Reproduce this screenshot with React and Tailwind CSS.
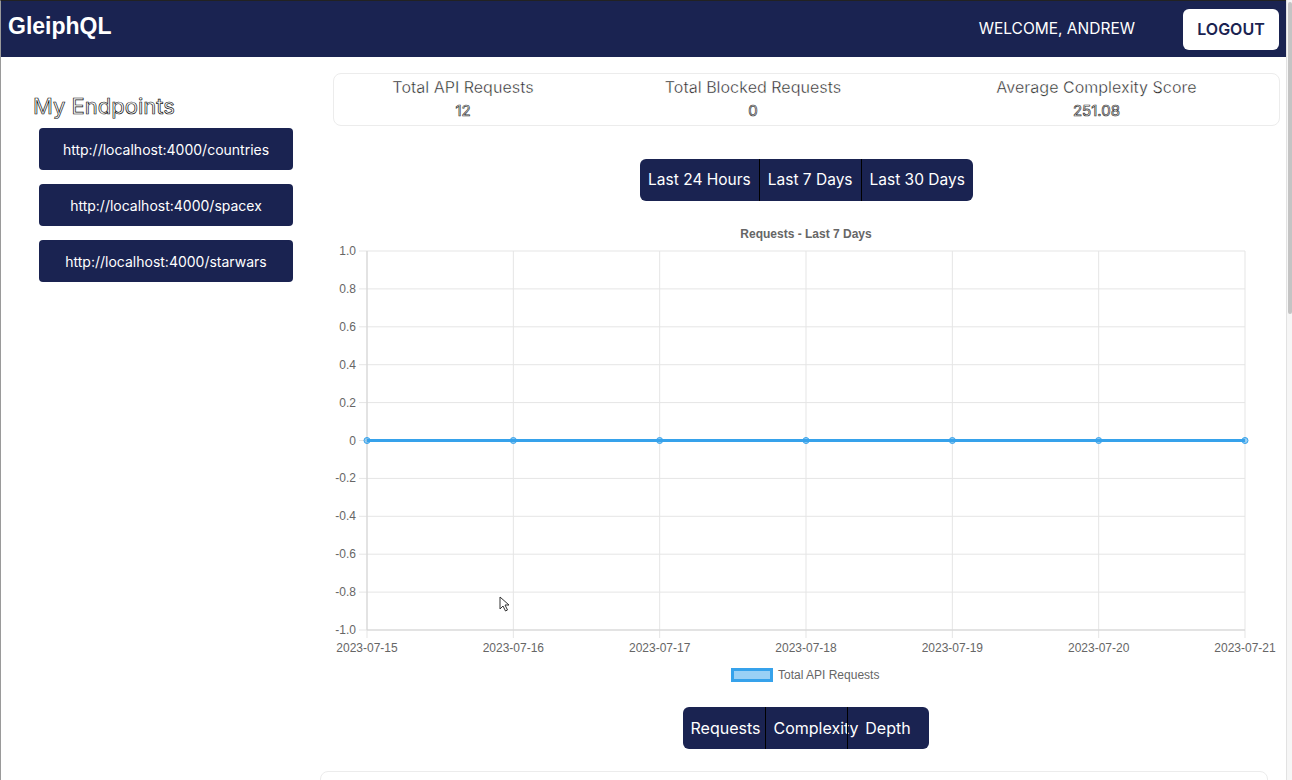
import React from "react";

const endpoints = [
  "http://localhost:4000/countries",
  "http://localhost:4000/spacex",
  "http://localhost:4000/starwars",
];

const stats = [
  { label: "Total API Requests", value: "12", width: "w-[258px]" },
  { label: "Total Blocked Requests", value: "0", width: "w-[322px]" },
  { label: "Average Complexity Score", value: "251.08", width: "flex-1" },
];

const yLabels = ["1.0", "0.8", "0.6", "0.4", "0.2", "0", "-0.2", "-0.4", "-0.6", "-0.8", "-1.0"];
const xLabels = ["2023-07-15", "2023-07-16", "2023-07-17", "2023-07-18", "2023-07-19", "2023-07-20", "2023-07-21"];

function RequestsChart() {
  const left = 34;
  const right = 912;
  const top = 29;
  const bottom = 408;
  const stepY = (bottom - top) / 10;
  const stepX = (right - left) / 6;
  const zeroY = top + stepY * 5;
  const font = "'Liberation Sans', Arial, sans-serif";

  return (
    <svg width="946" height="470" className="block" style={{ fontFamily: font }}>
      <text x="473" y="16" textAnchor="middle" fontSize="12" fontWeight="700" fill="#666">
        Requests - Last 7 Days
      </text>

      {/* horizontal grid */}
      {yLabels.map((label, i) => {
        const y = top + i * stepY;
        return (
          <g key={label}>
            <line x1="26" x2={right} y1={y} y2={y} stroke="#e5e5e5" strokeWidth="1" />
            <text x="23" y={y + 4} textAnchor="end" fontSize="12" fill="#666">
              {label}
            </text>
          </g>
        );
      })}

      {/* vertical grid */}
      {xLabels.map((label, i) => {
        const x = left + i * stepX;
        return (
          <g key={label}>
            <line x1={x} x2={x} y1={top} y2="416" stroke="#e5e5e5" strokeWidth="1" />
            <text x={x} y="430" textAnchor="middle" fontSize="12" fill="#666">
              {label}
            </text>
          </g>
        );
      })}
      <line x1={left} x2={right} y1={bottom} y2={bottom} stroke="#d4d4d4" strokeWidth="1" />
      <line x1={left} x2={left} y1={top} y2={bottom} stroke="#d4d4d4" strokeWidth="1" />

      {/* data */}
      <line x1={left} x2={right} y1={zeroY} y2={zeroY} stroke="#36a2eb" strokeWidth="3" />
      {xLabels.map((label, i) => (
        <circle
          key={label}
          cx={left + i * stepX}
          cy={zeroY}
          r="3"
          fill="rgba(54,162,235,0.5)"
          stroke="#36a2eb"
          strokeWidth="1"
        />
      ))}

      {/* legend */}
      <rect x="399.5" y="447.5" width="39" height="11" fill="rgba(54,162,235,0.5)" stroke="#36a2eb" strokeWidth="3" />
      <text x="445" y="457" fontSize="12" fill="#666">
        Total API Requests
      </text>
    </svg>
  );
}

function SegmentGroup({ items, itemClass }) {
  return (
    <div className="flex h-[42px] overflow-visible rounded-md bg-[#1a2351]">
      {items.map((item, i) => (
        <button
          key={item}
          className={`h-full whitespace-nowrap text-white ${itemClass} ${
            i > 0 ? "border-l border-black" : ""
          }`}
        >
          {item}
        </button>
      ))}
    </div>
  );
}

export default function App() {
  return (
    <div className="flex h-[780px] w-[1292px] overflow-hidden bg-white font-['Inter','Noto_Sans',sans-serif]">
      <div className="flex w-[1286px] flex-col border-t border-[#222] border-l border-l-[#9a9a9a]">
        {/* Navbar */}
        <header className="flex h-[56px] shrink-0 items-center bg-[#1a2351] pl-[7px] pr-[7px]">
          <h1 className="text-[23px] font-bold text-white font-['Liberation_Sans',Arial,sans-serif] -mt-[5px]">
            GleiphQL
          </h1>
          <div className="ml-auto flex items-center">
            <span className="text-[15.5px] text-white">WELCOME, ANDREW</span>
            <button className="ml-[48px] h-[41px] w-[96px] rounded-md bg-white text-[16px] font-semibold text-[#1a2351]">
              LOGOUT
            </button>
          </div>
        </header>

        <div className="flex flex-1">
          {/* Sidebar */}
          <aside className="w-[319px] shrink-0 pt-[36px] pl-[32px]">
            <h2 className="text-[22px] leading-[26px] text-white [-webkit-text-stroke:0.7px_#111]">
              My Endpoints
            </h2>
            <div className="mt-[9px] ml-[6px] flex w-[254px] flex-col gap-[14px]">
              {endpoints.map((url) => (
                <button
                  key={url}
                  className="h-[42px] rounded-[4px] bg-[#1a2351] text-[14px] text-white"
                >
                  {url}
                </button>
              ))}
            </div>
          </aside>

          {/* Main */}
          <main className="flex flex-1 flex-col pt-[16px]">
            <div className="ml-[13px] flex h-[53px] w-[947px] items-center rounded-lg border border-[#ececec]">
              {stats.map((s) => (
                <div key={s.label} className={`-mt-[2px] flex flex-col items-center ${s.width}`}>
                  <span className="text-[16px] leading-[20px] text-[#222] [-webkit-text-stroke:0.4px_white]">
                    {s.label}
                  </span>
                  <span className="mt-[5px] text-[15px] leading-[18px] text-white [-webkit-text-stroke:0.7px_#333]">
                    {s.value}
                  </span>
                </div>
              ))}
            </div>

            <div className="mt-[33px] ml-[13px] flex w-[947px] justify-center">
              <SegmentGroup
                items={["Last 24 Hours", "Last 7 Days", "Last 30 Days"]}
                itemClass="px-[8px] text-[15.5px]"
              />
            </div>

            <div className="mt-[21px] ml-[13px]">
              <RequestsChart />
            </div>

            <div className="mt-[15px] ml-[13px] flex w-[947px] justify-center">
              <div className="ml-[-2px]">
                <SegmentGroup
                  items={["Requests", "Complexity", "Depth"]}
                  itemClass="w-[82px] px-[8px] text-center text-[16px]"
                />
              </div>
            </div>

            <div className="mt-[22px] h-[40px] w-[948px] rounded-lg border border-[#ececec]" />
          </main>
        </div>
      </div>

      {/* Scrollbar */}
      <div className="flex w-[6px] shrink-0 justify-center border-l border-[#e2e2e2] bg-[#f6f6f6] pt-[2px]">
        <div className="h-[312px] w-[4px] rounded-full bg-[#c4c4c4]" />
      </div>

      {/* Cursor */}
      <svg
        className="pointer-events-none absolute left-[499px] top-[596px]"
        width="11"
        height="16"
        viewBox="0 0 11 16"
      >
        <path d="M1 1 L1 13 L4 10 L6.5 15 L8.5 14 L6 9 L10 9 Z" fill="white" stroke="#333" strokeWidth="1" />
      </svg>
    </div>
  );
}
